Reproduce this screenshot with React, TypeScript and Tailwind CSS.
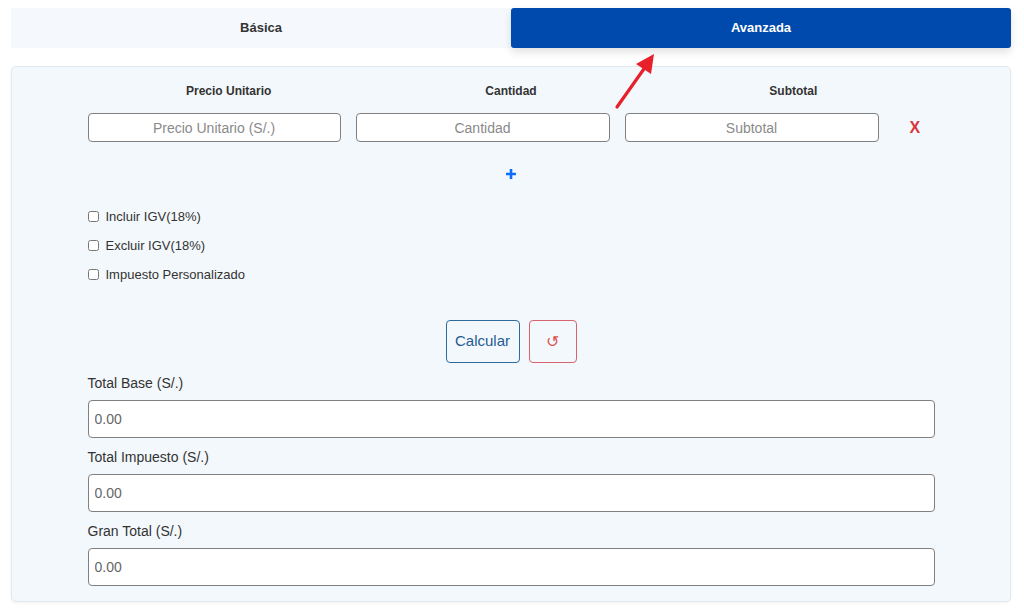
import { useState } from 'react';

const font = { fontFamily: '"Liberation Sans", Arial, sans-serif' };

function ResultField({ label }: { label: string }) {
  return (
    <div className="flex flex-col">
      <label className="text-[14px] text-[#333] leading-[17px] mb-[8px]">{label}</label>
      <input
        readOnly
        value="0.00"
        className="h-[38px] w-full rounded-[4px] border border-[#808080] bg-white px-[6px] text-[14px] text-[#666] outline-none"
      />
    </div>
  );
}

export default function App() {
  const [tab, setTab] = useState<'basica' | 'avanzada'>('avanzada');

  return (
    <div className="relative min-h-[609px] bg-white pt-[8px] px-[11px]" style={font}>
      {/* tabs */}
      <div className="flex h-[40px] w-[1000px]">
        <button
          onClick={() => setTab('basica')}
          className={`flex-1 text-[13px] font-bold ${tab === 'basica' ? 'bg-[#004aad] text-white rounded-[3px] shadow-[0_4px_8px_rgba(0,0,0,0.12)]' : 'bg-[#f5f9fd] text-[#333]'}`}
        >
          Básica
        </button>
        <button
          onClick={() => setTab('avanzada')}
          className={`flex-1 text-[13px] font-bold ${tab === 'avanzada' ? 'bg-[#004aad] text-white rounded-[3px] shadow-[0_4px_8px_rgba(0,0,0,0.12)]' : 'bg-[#f5f9fd] text-[#333]'}`}
        >
          Avanzada
        </button>
      </div>

      {/* panel */}
      <div className="mt-[18px] w-[1000px] rounded-[5px] border border-[#e3e9ef] bg-[#f3f8fc] pt-[17px] pb-[15px] shadow-[0_1px_3px_rgba(0,0,0,0.06)]">
        <div className="mx-auto w-[847px]">
          <div className="grid grid-cols-3 text-center text-[12px] font-bold text-[#333] leading-[14px]">
            <div>Precio Unitario</div>
            <div>Cantidad</div>
            <div>Subtotal</div>
          </div>

          <div className="mt-[15px] flex items-center gap-[15px]">
            <input
              placeholder="Precio Unitario (S/.)"
              className="h-[29px] w-[253px] rounded-[4px] border border-[#808080] bg-white text-center text-[14px] placeholder:text-[#8a8a8a] outline-none"
            />
            <input
              placeholder="Cantidad"
              className="h-[29px] w-[254px] rounded-[4px] border border-[#808080] bg-white text-center text-[14px] placeholder:text-[#8a8a8a] outline-none"
            />
            <input
              placeholder="Subtotal"
              className="h-[29px] w-[254px] rounded-[4px] border border-[#808080] bg-white text-center text-[14px] placeholder:text-[#8a8a8a] outline-none"
            />
            <button className="ml-[16px] text-[16px] font-bold text-[#d9363e]">X</button>
          </div>

          <div className="mt-[26px] flex justify-center">
            <button className="text-[#0d6efd]">
              <svg width="12" height="12" viewBox="0 0 12 12">
                <path d="M6 1v10M1 6h10" stroke="currentColor" strokeWidth="2.6" />
              </svg>
            </button>
          </div>

          <div className="mt-[28px] flex flex-col gap-[12px] text-[13px] text-[#333]">
            {['Incluir IGV(18%)', 'Excluir IGV(18%)', 'Impuesto Personalizado'].map((t) => (
              <label key={t} className="flex h-[17px] items-center gap-[7px]">
                <input type="checkbox" className="m-0 h-[11px] w-[11px] accent-[#0d6efd]" />
                <span>{t}</span>
              </label>
            ))}
          </div>

          <div className="mt-[37px] flex justify-center gap-[9px]">
            <button className="h-[43px] w-[74px] rounded-[4px] border border-[#2f6b9a] text-[15px] text-[#1f5c93]">
              Calcular
            </button>
            <button
              className="h-[43px] w-[48px] rounded-[4px] border border-[#d86470] text-[16px] text-[#d9534f]"
              style={{ fontFamily: '"DejaVu Sans", sans-serif', fontWeight: 300 }}
            >
              ↺
            </button>
          </div>

          <div className="mt-[12px] flex flex-col gap-[11px]">
            <ResultField label="Total Base (S/.)" />
            <ResultField label="Total Impuesto (S/.)" />
            <ResultField label="Gran Total (S/.)" />
          </div>
        </div>
      </div>

      {/* annotation arrow */}
      <svg className="pointer-events-none absolute left-[610px] top-[48px]" width="50" height="64" viewBox="0 0 50 64">
        <line x1="7" y1="59" x2="36" y2="18" stroke="#e8202a" strokeWidth="3.2" strokeLinecap="round" />
        <polygon points="44,6 26,16 41,26" fill="#e8202a" />
      </svg>
    </div>
  );
}
